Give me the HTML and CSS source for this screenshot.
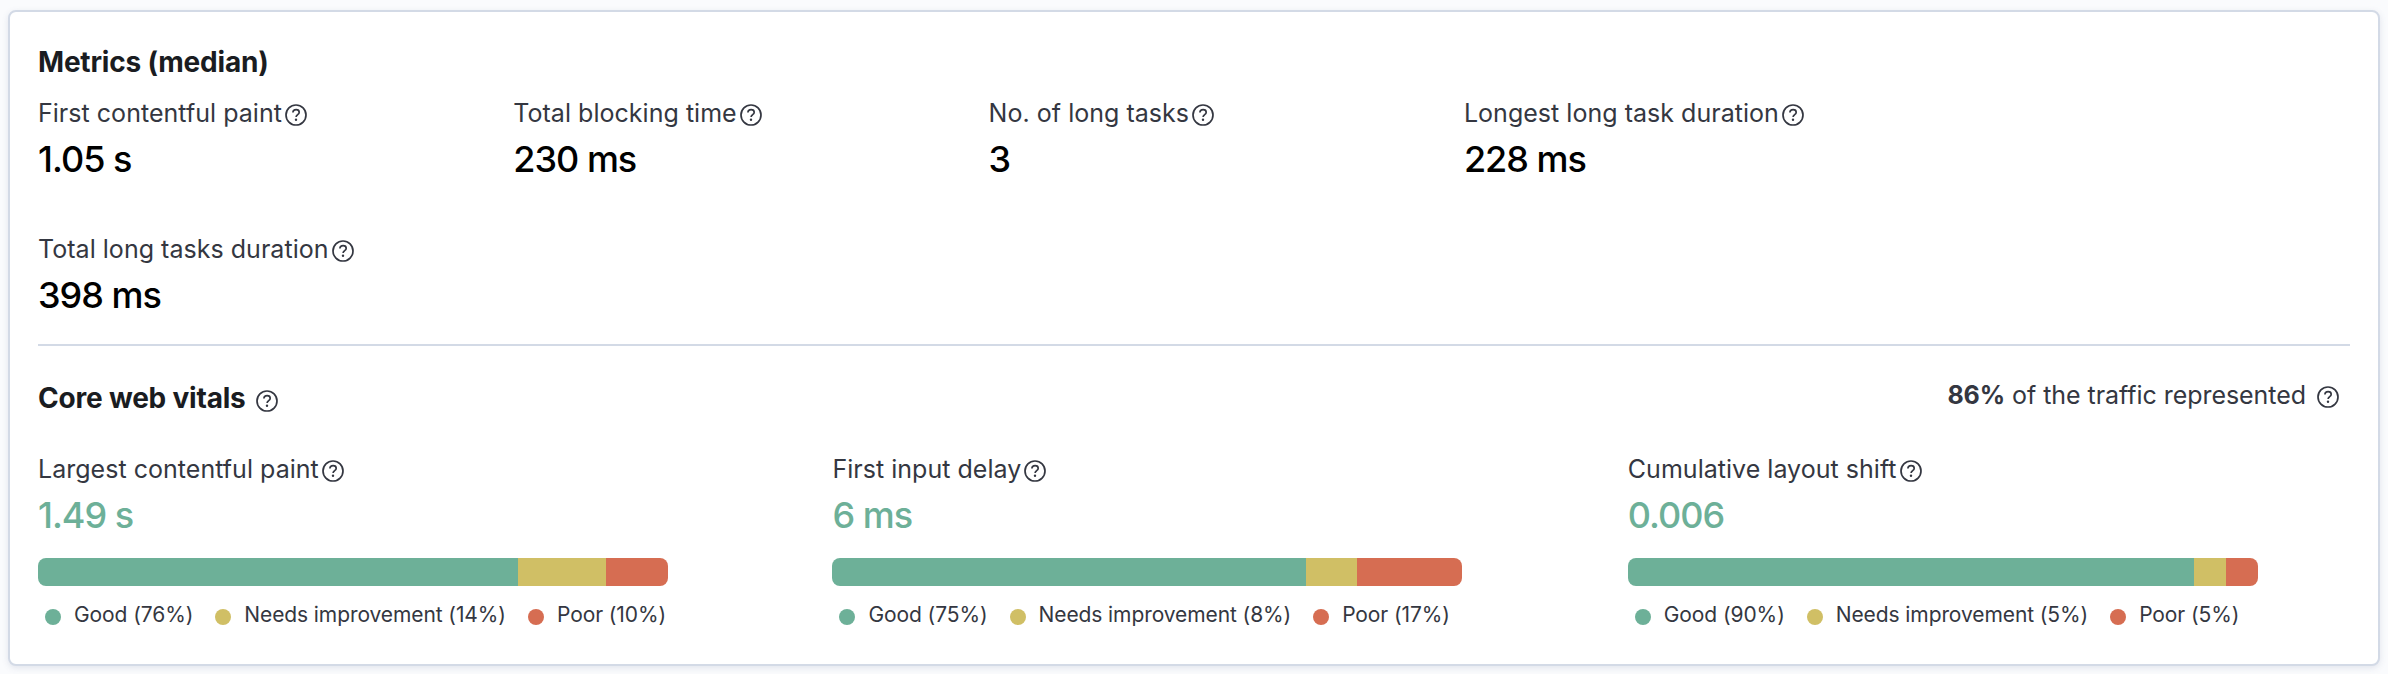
FILE: index.html
```html
<!DOCTYPE html>
<html lang="en">

<head>
    <meta charset="UTF-8">
    <meta name="viewport" content="width=device-width, initial-scale=1.0">
    <title>User experience</title>
    <link rel="stylesheet" href="styles.css">
</head>

<body>
    <!-- Shared help icon -->
    <svg class="sprite" width="0" height="0">
        <symbol id="help" viewBox="0 0 22 22">
            <circle cx="11" cy="11" r="10" fill="none" stroke="currentColor" stroke-width="1.7" />
            <path d="M7.9 8.5C8 6.6 9.2 5.6 11.1 5.6c1.8 0 3.1 1 3.1 2.6 0 1.2-.7 1.8-1.6 2.5-1 .7-1.5 1.2-1.5 2.4" fill="none" stroke="currentColor" stroke-width="1.7" />
            <circle cx="11" cy="15.8" r="1.2" fill="currentColor" />
        </symbol>
    </svg>

    <div class="panel">
        <h2 class="title">Metrics (median)</h2>
        <div class="metrics">
            <div class="stat">
                <div class="label">First contentful paint<svg class="icon"><use href="#help" /></svg></div>
                <div class="value">1.05 s</div>
            </div>
            <div class="stat">
                <div class="label">Total blocking time<svg class="icon"><use href="#help" /></svg></div>
                <div class="value">230 ms</div>
            </div>
            <div class="stat">
                <div class="label">No. of long tasks<svg class="icon"><use href="#help" /></svg></div>
                <div class="value">3</div>
            </div>
            <div class="stat">
                <div class="label">Longest long task duration<svg class="icon"><use href="#help" /></svg></div>
                <div class="value">228 ms</div>
            </div>
            <div class="stat">
                <div class="label">Total long tasks duration<svg class="icon"><use href="#help" /></svg></div>
                <div class="value">398 ms</div>
            </div>
        </div>

        <hr class="rule">

        <div class="header">
            <h2 class="title">Core web vitals<svg class="icon"><use href="#help" /></svg></h2>
            <div class="traffic"><span><b>86%</b> of the traffic represented</span><svg class="icon"><use href="#help" /></svg></div>
        </div>

        <div class="vitals">
            <div class="vital">
                <div class="label">Largest contentful paint<svg class="icon"><use href="#help" /></svg></div>
                <div class="value green">1.49 s</div>
                <div class="bar">
                    <span class="good" style="width: 76.2%"></span>
                    <span class="needs" style="width: 14%"></span>
                    <span class="poor" style="width: 9.8%"></span>
                </div>
                <div class="legend">
                    <span class="item"><i class="dot good"></i>Good (76%)</span>
                    <span class="item"><i class="dot needs"></i>Needs improvement (14%)</span>
                    <span class="item"><i class="dot poor"></i>Poor (10%)</span>
                </div>
            </div>
            <div class="vital">
                <div class="label">First input delay<svg class="icon"><use href="#help" /></svg></div>
                <div class="value green">6 ms</div>
                <div class="bar">
                    <span class="good" style="width: 75.2%"></span>
                    <span class="needs" style="width: 8%"></span>
                    <span class="poor" style="width: 16.8%"></span>
                </div>
                <div class="legend">
                    <span class="item"><i class="dot good"></i>Good (75%)</span>
                    <span class="item"><i class="dot needs"></i>Needs improvement (8%)</span>
                    <span class="item"><i class="dot poor"></i>Poor (17%)</span>
                </div>
            </div>
            <div class="vital">
                <div class="label">Cumulative layout shift<svg class="icon"><use href="#help" /></svg></div>
                <div class="value green">0.006</div>
                <div class="bar">
                    <span class="good" style="width: 89.9%"></span>
                    <span class="needs" style="width: 5%"></span>
                    <span class="poor" style="width: 5.1%"></span>
                </div>
                <div class="legend">
                    <span class="item"><i class="dot good"></i>Good (90%)</span>
                    <span class="item"><i class="dot needs"></i>Needs improvement (5%)</span>
                    <span class="item"><i class="dot poor"></i>Poor (5%)</span>
                </div>
            </div>
        </div>
    </div>
</body>

</html>
```

FILE: styles.css
```css
* {
    box-sizing: border-box;
}

body {
    font-family: Inter, "Liberation Sans", sans-serif;
    margin: 0;
    padding: 10px 8px 8px;
    background-color: #fafbfd;
    color: #343741;
}

.sprite {
    display: none;
}

.panel {
    height: 656px;
    padding: 30px 28px 0;
    background: white;
    border: 2px solid #d3dae6;
    border-radius: 8px;
    box-shadow: 0 2px 6px rgba(90, 100, 140, 0.15);
}

.title {
    display: flex;
    align-items: center;
    margin: 0;
    font-size: 28px;
    line-height: 40px;
    font-weight: 700;
    letter-spacing: -0.2px;
    color: #1a1c21;
}

.icon {
    width: 22px;
    height: 22px;
    margin: 4px 0 0 3px;
    flex-shrink: 0;
    color: #343741;
}

.title .icon {
    margin: 6px 0 0 10px;
}

.metrics {
    display: grid;
    grid-template-columns: repeat(4, 475.3px);
    row-gap: 50px;
    margin-top: 13px;
}

.label {
    display: flex;
    align-items: center;
    font-size: 25px;
    line-height: 36px;
    letter-spacing: 0.03px;
}

.value {
    margin-top: 6px;
    font-size: 36px;
    line-height: 44px;
    font-weight: 550;
    letter-spacing: -1px;
    color: #000;
}

.value.green {
    color: #6db098;
}

.rule {
    height: 2px;
    margin: 27px 0 0;
    border: none;
    background: #d3dae6;
}

.header {
    display: flex;
    justify-content: space-between;
    align-items: flex-start;
    margin-top: 32px;
    height: 40px;
}

.traffic {
    display: flex;
    align-items: center;
    padding-right: 11px;
    font-size: 25px;
    line-height: 34px;
    letter-spacing: -0.05px;
}

.traffic .icon {
    margin-left: 11px;
}

.vitals {
    display: grid;
    grid-template-columns: 630px 631px 630px;
    column-gap: 164.4px;
    margin-top: 33px;
}

.bar {
    display: flex;
    width: 630px;
    height: 28px;
    margin-top: 21px;
    border-radius: 8px;
    overflow: hidden;
}

.good {
    background: #6db098;
}

.needs {
    background: #d0bf65;
}

.poor {
    background: #d66d52;
}

.legend {
    display: flex;
    gap: 22px;
    margin-top: 13px;
    padding-left: 7px;
    font-size: 21px;
    line-height: 32px;
    letter-spacing: -0.09px;
    white-space: nowrap;
}

.item {
    display: flex;
    align-items: center;
}

.dot {
    width: 16px;
    height: 16px;
    margin: 4px 13px 0 0;
    border-radius: 50%;
}
```
